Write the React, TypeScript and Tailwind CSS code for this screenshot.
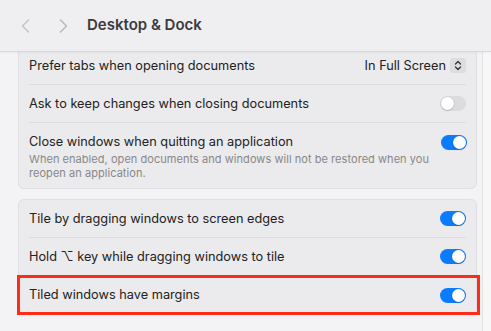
import { ReactNode } from "react"

function Toggle({ on }: { on: boolean }) {
  return (
    <div
      className={`w-[26px] h-[15px] rounded-full p-[1px] flex ${
        on ? "bg-[#0b7bff] justify-end" : "bg-[#dcdbde] justify-start"
      }`}
    >
      <div className="w-[13px] h-[13px] rounded-full bg-white shadow-[0_0.5px_1.5px_rgba(0,0,0,0.3)]" />
    </div>
  )
}

function Row({ label, sub, right, last }: { label: string; sub?: string; right: ReactNode; last?: boolean }) {
  return (
    <div className="px-[10px]">
      <div
        className={`flex justify-between ${sub ? "items-start pt-[11px] pb-[8px]" : "items-center h-[38px]"} ${
          last ? "" : "border-b border-[#dcdbde]"
        }`}
      >
        <div className="flex flex-col">
          <span className="text-[12.75px] text-[#222] leading-[16px]">{label}</span>
          {sub && (
            <span className="text-[11px] tracking-[0.05px] text-[#888] leading-[14px] mt-[2px] w-[412px]">{sub}</span>
          )}
        </div>
        <div className={sub ? "pt-[1px]" : ""}>{right}</div>
      </div>
    </div>
  )
}

export default function App() {
  return (
    <div
      className="w-[491px] h-[331px] bg-[#f3f2f5] flex flex-col overflow-hidden"
      style={{ fontFamily: "Inter, 'Noto Sans', sans-serif" }}
    >
      <div className="h-[52px] shrink-0 bg-[#efeef1] border-b border-[#d8d7da] shadow-[0_1px_2px_rgba(0,0,0,0.04)] flex items-center z-10">
        <div className="flex items-center gap-[29px] pl-[21px]">
          <svg width="9" height="14" viewBox="0 0 9 14" fill="none">
            <path d="M7.5 1 L1.5 7 L7.5 13" stroke="#c4c3c6" strokeWidth="1.5" strokeLinecap="round" strokeLinejoin="round" />
          </svg>
          <svg width="9" height="14" viewBox="0 0 9 14" fill="none">
            <path d="M1.5 1 L7.5 7 L1.5 13" stroke="#b8b7ba" strokeWidth="1.5" strokeLinecap="round" strokeLinejoin="round" />
          </svg>
        </div>
        <span className="ml-[19px] text-[15px] font-semibold text-[#3b3b3d]">Desktop &amp; Dock</span>
      </div>
      <div className="flex flex-1 min-h-0">
        <div className="w-[483px] border-r border-[#e2e1e4] pl-[18px] pr-[5px] flex flex-col gap-[10px]">
          <div className="-mt-[6px] bg-[#ebeaed] border border-[#dfdee1] rounded-[6px]">
            <Row
              label="Prefer tabs when opening documents"
              right={
                <div className="flex items-center gap-[4px]">
                  <span className="text-[12.75px] text-[#222]">In Full Screen</span>
                  <div className="w-[16px] h-[15px] rounded-[3px] bg-[#dddcdf] flex items-center justify-center">
                    <svg width="8" height="11" viewBox="0 0 8 11" fill="none">
                      <path d="M1.5 4 L4 1.5 L6.5 4 M1.5 7 L4 9.5 L6.5 7" stroke="#333" strokeWidth="1.3" strokeLinecap="round" strokeLinejoin="round" />
                    </svg>
                  </div>
                </div>
              }
            />
            <Row label="Ask to keep changes when closing documents" right={<Toggle on={false} />} />
            <Row
              label="Close windows when quitting an application"
              sub="When enabled, open documents and windows will not be restored when you reopen an application."
              right={<Toggle on />}
              last
            />
          </div>
          <div className="bg-[#ebeaed] border border-[#dfdee1] rounded-[6px]">
            <Row label="Tile by dragging windows to screen edges" right={<Toggle on />} />
            <Row label="Hold ⌥ key while dragging windows to tile" right={<Toggle on />} />
            <div className="relative">
              <Row label="Tiled windows have margins" right={<Toggle on />} last />
              <div className="absolute -left-[2px] -right-[4px] -top-[1px] -bottom-[1px] border-[3px] border-[#ff2a17]" />
            </div>
          </div>
        </div>
        <div className="flex-1 bg-[#f7f7f8]" />
      </div>
    </div>
  )
}
